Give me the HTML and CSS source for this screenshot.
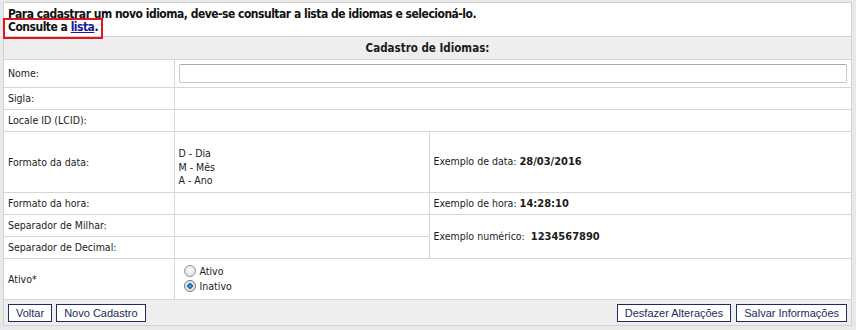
FILE: index.html
```html
<!DOCTYPE html>
<html lang="pt-BR">
<head>
    <meta charset="UTF-8">
    <title>Cadastro de Idiomas</title>
    <link rel="stylesheet" href="styles.css">
</head>
<body>
    <div class="box">
        <div class="info">
            <p>Para cadastrar um novo idioma, deve-se consultar a lista de idiomas e selecioná-lo.</p>
            <p>Consulte a <a href="#">lista</a>.</p>
            <span class="mark"></span>
        </div>
        <table class="form">
            <colgroup>
                <col class="c-label">
                <col class="c-mid">
                <col>
            </colgroup>
            <tr class="head">
                <th colspan="3">Cadastro de Idiomas:</th>
            </tr>
            <tr class="r-nome">
                <td>Nome:</td>
                <td colspan="2"><input type="text" class="txt"></td>
            </tr>
            <tr>
                <td>Sigla:</td>
                <td colspan="2"></td>
            </tr>
            <tr>
                <td>Locale ID (LCID):</td>
                <td colspan="2"></td>
            </tr>
            <tr class="r-data">
                <td>Formato da data:</td>
                <td class="fmt">D - Dia<br>M - Mês<br>A - Ano</td>
                <td>Exemplo de data: <b>28/03/2016</b></td>
            </tr>
            <tr>
                <td>Formato da hora:</td>
                <td></td>
                <td>Exemplo de hora: <b>14:28:10</b></td>
            </tr>
            <tr>
                <td>Separador de Milhar:</td>
                <td></td>
                <td rowspan="2">Exemplo numérico: &nbsp;<b>1234567890</b></td>
            </tr>
            <tr>
                <td>Separador de Decimal:</td>
                <td></td>
            </tr>
            <tr class="r-ativo">
                <td>Ativo*</td>
                <td colspan="2">
                    <label class="opt"><input type="radio" name="ativo"> Ativo</label>
                    <label class="opt"><input type="radio" name="ativo" checked> Inativo</label>
                </td>
            </tr>
        </table>
        <div class="bar">
            <div class="left">
                <button class="btn">Voltar</button>
                <button class="btn">Novo Cadastro</button>
            </div>
            <div class="right">
                <button class="btn">Desfazer Alterações</button>
                <button class="btn">Salvar Informações</button>
            </div>
        </div>
    </div>
</body>
</html>
```

FILE: styles.css
```css
*{
   margin:0;
   padding:0;
   box-sizing:border-box;
}
body{
   background:#e9e9e9;
   padding:2px 4px 0 3px;
   font-family:"DejaVu Sans Condensed","Liberation Sans",sans-serif;
   font-size:10.5px;
   color:#1b1b1b;
}
.box{
   background:#fff;
   border:1px solid #d2d2d2;
   width:849px;
}
.info{
   position:relative;
   height:34px;
   padding:5px 4px 0 4px;
   font-weight:bold;
   font-size:12px;
   letter-spacing:-0.5px;
   line-height:13px;
   color:#111;
   border-bottom:1px solid #d2d2d2;
}
.info a{
   color:#1a1aa0;
}
.mark{
   position:absolute;
   left:-1px;
   top:15px;
   width:100px;
   height:21px;
   border:2px solid #e3141c;
}
.form{
   width:100%;
   border-collapse:collapse;
}
.c-label{
   width:170px;
}
.c-mid{
   width:255px;
}
.form th{
   background:#eeeeee;
   height:22px;
   font-size:11.5px;
   font-weight:bold;
   border-bottom:1px solid #d6d6d6;
}
.form td{
   height:22px;
   padding:0 4px;
   border:1px solid #d6d6d6;
   vertical-align:middle;
}
.form tr td:first-child{
   border-left:none;
}
.form tr td:last-child{
   border-right:none;
}
.form tr:last-child td{
   border-bottom:none;
}
.r-nome td{
   height:28px;
}
.txt{
   display:block;
   width:100%;
   height:19px;
   border:1px solid #c9c9c9;
   border-top-color:#a9a9ad;
   border-radius:2px;
   background:#fff;
}
.r-data td{
   height:61px;
}
.fmt{
   padding-top:12px !important;
   line-height:13.5px;
}
.form b{
   font-size:11px;
}
.r-ativo td{
   height:41px;
}
.opt{
   display:flex;
   align-items:center;
   gap:4px;
   height:15px;
   padding-left:5px;
}
.opt input{
   appearance:none;
   width:12px;
   height:12px;
   border-radius:50%;
   border:1px solid #9a9a9a;
   background:radial-gradient(circle at 50% 40%,#fdfdfd 0,#e6e6e6 60%,#cfcfcf 100%);
}
.opt input:checked{
   background:radial-gradient(circle,#5aa9e6 0,#1f5fa8 2.5px,#e9e9e9 3px,#dcdcdc 100%);
   border-color:#6f7f90;
}
.bar{
   display:flex;
   justify-content:space-between;
   background:#eeeeee;
   border-top:1px solid #d6d6d6;
   padding:4px 4px 3px 4px;
   height:26px;
}
.left,.right{
   display:flex;
   gap:4px;
}
.right{
   gap:5px;
}
.btn{
   height:18px;
   padding:0 7px;
   background:#fff;
   border:1px solid #1d2b66;
   color:#1d2b5c;
   font-family:"Liberation Sans",Arial,sans-serif;
   font-size:11px;
}
```
